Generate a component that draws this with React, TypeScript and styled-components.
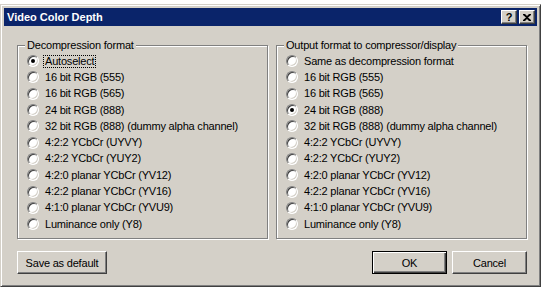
import styled, { createGlobalStyle } from 'styled-components';

const GlobalStyle = createGlobalStyle`
    html, body {
        margin: 0;
        background: #ffffff;
    }
    body {
        font-family: 'Liberation Sans', Arial, sans-serif;
        font-size: 11px;
        color: #000;
    }
`;

const decompression = [
    'Autoselect',
    '16 bit RGB (555)',
    '16 bit RGB (565)',
    '24 bit RGB (888)',
    '32 bit RGB (888) (dummy alpha channel)',
    '4:2:2 YCbCr (UYVY)',
    '4:2:2 YCbCr (YUY2)',
    '4:2:0 planar YCbCr (YV12)',
    '4:2:2 planar YCbCr (YV16)',
    '4:1:0 planar YCbCr (YVU9)',
    'Luminance only (Y8)'
];

const output = ['Same as decompression format', ...decompression.slice(1)];

const CloseGlyph = () => (
    <svg width="8" height="7" viewBox="0 0 8 7">
        <path d="M0 0h2l2 2 2-2h2v1L5 3.5 8 6v1H6L4 5 2 7H0V6l3-2.5L0 1z" fill="#000" />
    </svg>
);

type GroupProps = {
    title: string;
    items: string[];
    selected: number;
    focused?: number;
};

const Group = ({ title, items, selected, focused }: GroupProps): JSX.Element => {
    return (
        <GroupBox>
            <GroupLabel>{title}</GroupLabel>
            {items.map((item, i) => (
                <RadioRow key={item}>
                    <Radio $checked={i === selected} />
                    <RadioText $focused={i === focused}>{item}</RadioText>
                </RadioRow>
            ))}
        </GroupBox>
    );
};

const App = (): JSX.Element => {
    return (
        <>
            <GlobalStyle />
            <Window>
                <TitleBar>
                    <TitleText>Video Color Depth</TitleText>
                    <TitleButtons>
                        <CaptionButton>?</CaptionButton>
                        <CaptionButton>
                            <CloseGlyph />
                        </CaptionButton>
                    </TitleButtons>
                </TitleBar>
                <Body>
                    <Groups>
                        <Group title="Decompression format" items={decompression} selected={0} focused={0} />
                        <Group title="Output format to compressor/display" items={output} selected={3} />
                    </Groups>
                    <Footer>
                        <Button $width={90}>Save as default</Button>
                        <ButtonPair>
                            <Button $default>OK</Button>
                            <Button>Cancel</Button>
                        </ButtonPair>
                    </Footer>
                </Body>
            </Window>
        </>
    );
};

export default App;

const Window = styled.div`
    box-sizing: border-box;
    width: 541px;
    height: 283px;
    margin-top: 4px;
    padding: 3px;
    display: flex;
    flex-direction: column;
    background: #d4d0c8;
    border: 1px solid;
    border-color: #d4d0c8 #404040 #404040 #d4d0c8;
    box-shadow: inset 1px 1px #ffffff, inset -1px -1px #808080;
`;

const TitleBar = styled.div`
    height: 18px;
    display: flex;
    align-items: center;
    justify-content: space-between;
    padding: 0 2px 0 3px;
    background: #0a246a;
`;

const TitleText = styled.span`
    color: #ffffff;
    font-weight: bold;
    font-size: 11px;
    line-height: 18px;
`;

const TitleButtons = styled.div`
    display: flex;
    gap: 2px;
`;

const CaptionButton = styled.div`
    box-sizing: border-box;
    width: 16px;
    height: 14px;
    display: flex;
    align-items: center;
    justify-content: center;
    background: #d4d0c8;
    border: 1px solid;
    border-color: #ffffff #404040 #404040 #ffffff;
    box-shadow: inset -1px -1px #808080;
    font-weight: bold;
    font-size: 11px;
    line-height: 12px;
`;

const Body = styled.div`
    flex: 1;
    display: flex;
    flex-direction: column;
    padding: 13px 0 0 13px;
    letter-spacing: -0.2px;
`;

const Groups = styled.div`
    display: flex;
    gap: 8px;
`;

const GroupBox = styled.fieldset`
    box-sizing: border-box;
    width: 251px;
    margin: 0;
    padding: 1px 8px 6px 9px;
    border: 1px solid #808080;
    box-shadow: inset 1px 1px #ffffff, 1px 1px #ffffff;
`;

const GroupLabel = styled.legend`
    margin-left: -2px;
    padding: 0 2px;
    font-size: 11px;
    line-height: 13px;
    background: #d4d0c8;
`;

const RadioRow = styled.div`
    height: 16.3px;
    display: flex;
    align-items: center;
    gap: 4px;
`;

const Radio = styled.span<{ $checked?: boolean }>`
    box-sizing: border-box;
    position: relative;
    flex: none;
    width: 12px;
    height: 12px;
    border-radius: 50%;
    background: #ffffff;
    border: 1px solid;
    border-color: #808080 #ffffff #ffffff #808080;
    box-shadow: inset 1px 1px #404040, inset -1px -1px #d4d0c8;

    &::after {
        content: '';
        display: ${(p) => (p.$checked ? 'block' : 'none')};
        position: absolute;
        left: 3px;
        top: 3px;
        width: 4px;
        height: 4px;
        border-radius: 50%;
        background: #000;
    }
`;

const RadioText = styled.span<{ $focused?: boolean }>`
    padding: 0 1px;
    line-height: 11px;
    white-space: nowrap;
    border: 1px dotted ${(p) => (p.$focused ? '#000' : 'transparent')};
`;

const Footer = styled.div`
    width: 510px;
    margin-top: 12px;
    display: flex;
    justify-content: space-between;
`;

const ButtonPair = styled.div`
    display: flex;
    gap: 5px;
`;

const Button = styled.div<{ $width?: number; $default?: boolean }>`
    box-sizing: border-box;
    width: ${(p) => p.$width ?? 75}px;
    height: 23px;
    display: flex;
    align-items: center;
    justify-content: center;
    background: #d4d0c8;
    font-size: 11px;
    border: 1px solid;
    border-color: ${(p) => (p.$default ? '#000' : '#ffffff #404040 #404040 #ffffff')};
    box-shadow: ${(p) =>
        p.$default
            ? 'inset 1px 1px #ffffff, inset -1px -1px #404040, inset -2px -2px #808080'
            : 'inset -1px -1px #808080'};
`;
